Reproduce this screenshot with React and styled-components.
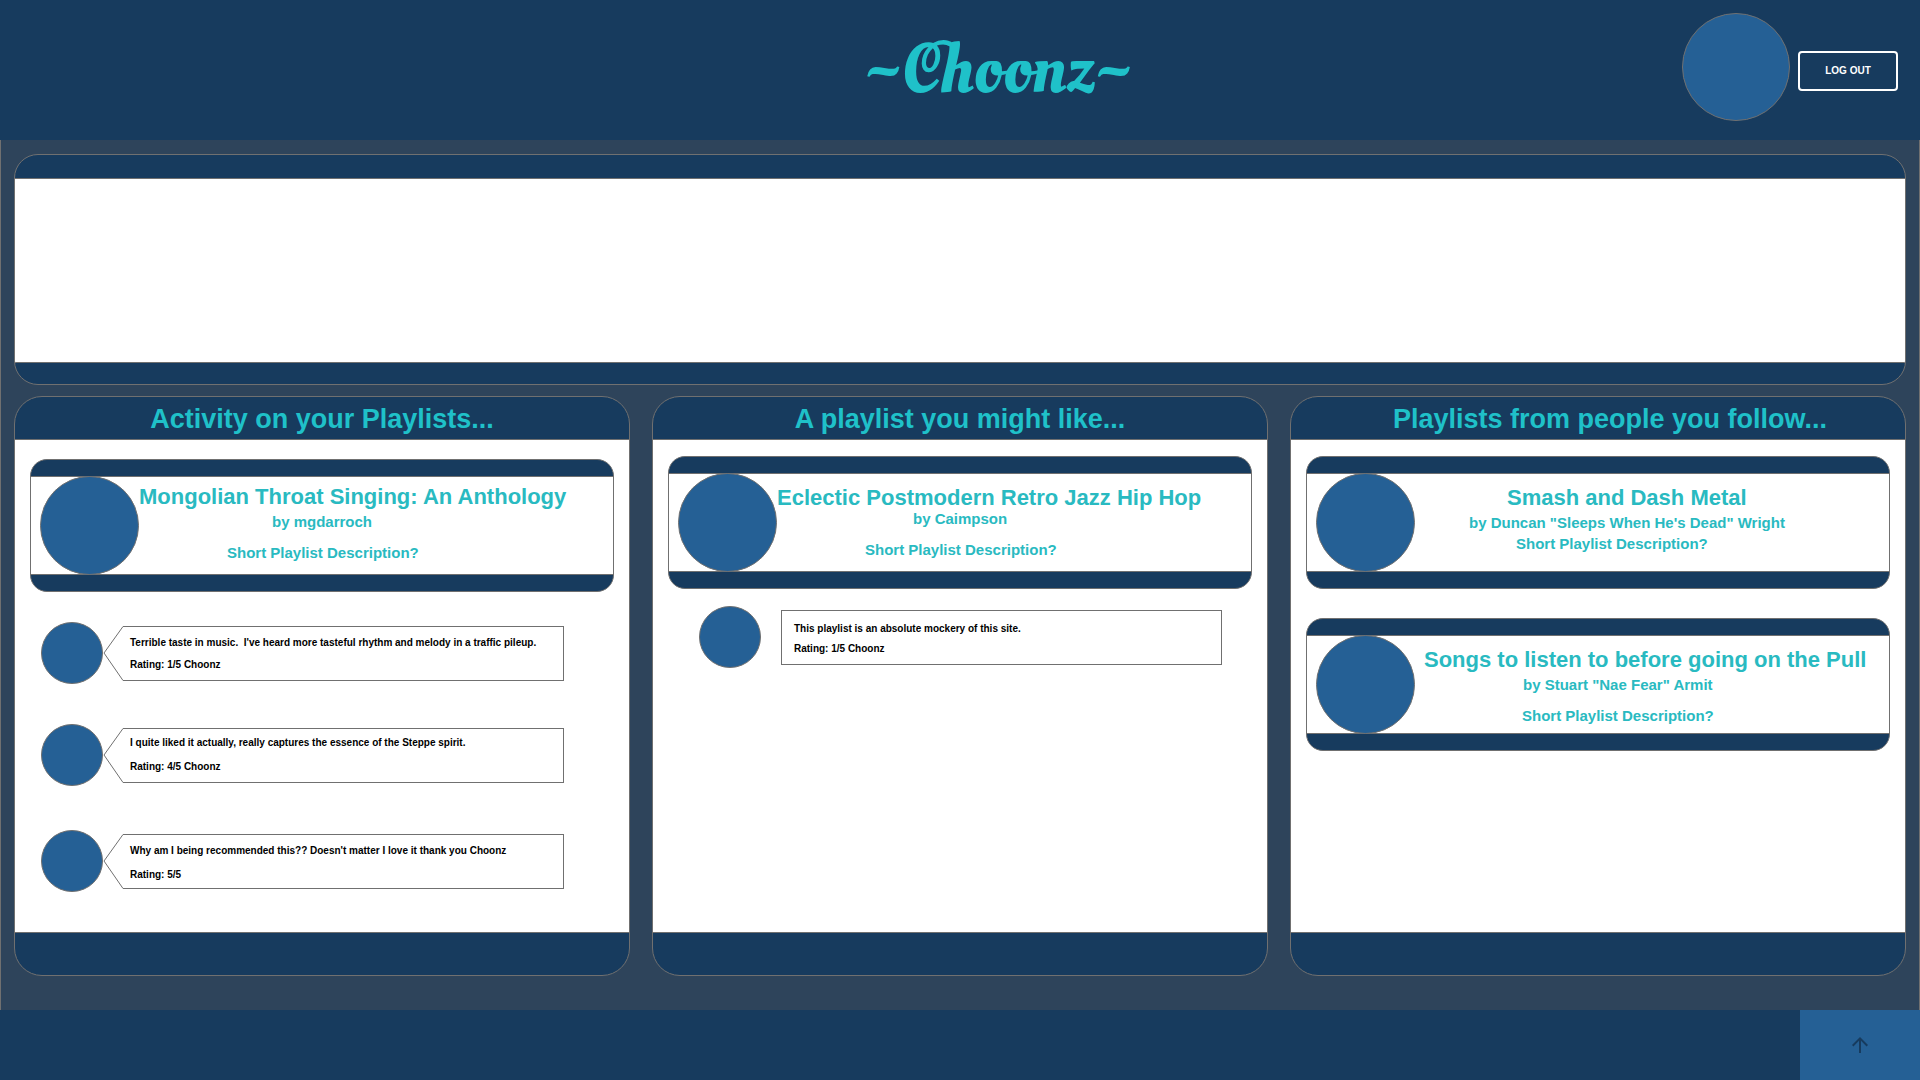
import React from "react";
import styled, { createGlobalStyle } from "styled-components";

const color = {
  navy: "#173b5e",
  slate: "#2e445b",
  blue: "#256095",
  teal: "#1fc1c9",
  tealOnWhite: "#29bac1",
  line: "#707070",
};

const GlobalStyle = createGlobalStyle`
  *, *::before, *::after { box-sizing: border-box; }
  body {
    margin: 0;
    background: ${color.slate};
    font-family: "Liberation Sans", Arial, sans-serif;
  }
  h1, h2, h3, p { margin: 0; }
`;

const Page = styled.div`
  display: flex;
  flex-direction: column;
  min-height: 100vh;
`;

const Header = styled.header`
  display: grid;
  grid-template-columns: 1fr auto 1fr;
  align-items: center;
  min-height: 140px;
  padding: 2px 22px 0 98px;
  background: ${color.navy};
`;

const Logo = styled.h1`
  grid-column: 2;
  color: ${color.teal};
  font-family: "Oleo Script Swash Caps", "Oleo Script", Lobster, "Liberation Serif", serif;
  font-size: 70px;
  font-weight: 400;
  line-height: 88px;
`;

const Account = styled.div`
  display: flex;
  align-items: center;
  justify-content: flex-end;
  gap: 8px;
`;

const Avatar = styled.div`
  flex: none;
  width: ${(p) => p.$size}px;
  height: ${(p) => p.$size}px;
  border: 1px solid ${color.line};
  border-radius: 50%;
  background: ${color.blue};
`;

const AccountAvatar = styled(Avatar)`
  margin-bottom: 8px;
`;

const LogOutButton = styled.button`
  width: 100px;
  height: 40px;
  padding: 0;
  border: 2px solid #fff;
  border-radius: 4px;
  background: transparent;
  color: #fff;
  font: 700 10px/12px "Liberation Sans", Arial, sans-serif;
  cursor: pointer;
`;

const Main = styled.main`
  display: flex;
  flex: 1;
  flex-direction: column;
  gap: 11px;
  padding: 14px 13px 34px;
  border: solid ${color.line};
  border-width: 0 1px;
`;

const Panel = styled.section`
  display: flex;
  flex-direction: column;
  overflow: hidden;
  border: 1px solid ${color.line};
  border-radius: ${(p) => p.$radius}px;
  background: ${color.navy};
`;

const BannerBody = styled.div`
  height: 185px;
  margin: 23px 0 21px;
  border: solid ${color.line};
  border-width: 1px 0;
  background: #fff;
`;

const Columns = styled.div`
  display: grid;
  flex: 1;
  grid-template-columns: repeat(3, minmax(0, 1fr));
  gap: 22px;
`;

const ColumnTitle = styled.h2`
  padding: 2px 0 0 ${(p) => p.$inset || 0}px;
  color: ${color.teal};
  font-size: 27px;
  line-height: 40px;
  text-align: center;
`;

const ColumnBody = styled.div`
  flex: 1;
  margin-bottom: 42px;
  padding: ${(p) => p.$top}px 15px 0;
  border: solid ${color.line};
  border-width: 1px 0;
  background: #fff;
`;

const CardList = styled.div`
  display: flex;
  flex-direction: column;
  gap: 29px;
`;

const CardShell = styled.article`
  overflow: hidden;
  padding: 16px 0;
  border: 1px solid ${color.line};
  border-radius: 17px;
  background: ${color.navy};
`;

const CardBody = styled.div`
  display: flex;
  height: 99px;
  padding-left: 9px;
  border: solid ${color.line};
  border-width: 1px 0;
  background: #fff;
`;

const CardAvatar = styled(Avatar)`
  margin: -1px 0;
`;

const CardText = styled.div`
  padding-top: ${(p) => p.$top}px;
  color: ${color.tealOnWhite};
  font-weight: 700;
  white-space: nowrap;
`;

const CardTitle = styled.h3`
  padding-left: ${(p) => p.$indent}px;
  font-size: 22px;
  line-height: 24px;
`;

const CardLine = styled.p`
  margin-top: ${(p) => p.$gap}px;
  padding-left: ${(p) => p.$indent}px;
  font-size: 15px;
  line-height: 18px;
`;

const Comments = styled.ul`
  display: flex;
  flex-direction: column;
  margin: 0;
  padding: ${(p) => p.$top}px 0 0 ${(p) => p.$left}px;
  list-style: none;
`;

const Comment = styled.li`
  display: flex;
  align-items: center;
  margin-bottom: ${(p) => p.$space || 0}px;
`;

const Tail = styled.svg`
  flex: none;
  display: block;
  width: 20px;
  height: 55px;
`;

const Bubble = styled.div`
  width: 441px;
  height: 55px;
  margin-left: ${(p) => (p.$boxed ? 20 : 0)}px;
  padding: ${(p) => p.$top}px ${(p) => (p.$boxed ? 12 : 7)}px 0;
  border: 1px solid ${color.line};
  border-left-width: ${(p) => (p.$boxed ? 1 : 0)}px;
  color: #000;
  font-size: 10px;
  font-weight: 700;
  line-height: 12px;
  white-space: pre;
`;

const Rating = styled.p`
  margin-top: ${(p) => p.$gap}px;
`;

const Footer = styled.footer`
  display: flex;
  justify-content: flex-end;
  height: 70px;
  background: ${color.navy};
`;

const TopLink = styled.a`
  display: flex;
  align-items: center;
  justify-content: center;
  width: 120px;
  background: ${color.blue};
  color: ${color.navy};
`;

function PlaylistCard({ title, author, top = 12 }) {
  return (
    <CardShell>
      <CardBody>
        <CardAvatar $size={99} />
        <CardText $top={top}>
          <CardTitle $indent={title.indent}>{title.text}</CardTitle>
          <CardLine $gap={author.gap} $indent={author.indent}>{author.text}</CardLine>
          <CardLine $gap={author.after} $indent={author.descriptionIndent}>
            Short Playlist Description?
          </CardLine>
        </CardText>
      </CardBody>
    </CardShell>
  );
}

function CommentRow({ text, rating, top = 10, gap, space, boxed }) {
  return (
    <Comment $space={space}>
      <Avatar $size={62} />
      {!boxed && (
        <Tail viewBox="0 0 20 55" fill="none" stroke={color.line} aria-hidden="true">
          <path d="M20 0.5L1 27L20 54.5" />
        </Tail>
      )}
      <Bubble $boxed={boxed} $top={top}>
        <p>{text}</p>
        <Rating $gap={gap}>{rating}</Rating>
      </Bubble>
    </Comment>
  );
}

const activity = [
  { text: "Terrible taste in music.  I've heard more tasteful rhythm and melody in a traffic pileup.", rating: "Rating: 1/5 Choonz", gap: 10, space: 40 },
  { text: "I quite liked it actually, really captures the essence of the Steppe spirit.", rating: "Rating: 4/5 Choonz", top: 8, gap: 12, space: 44 },
  { text: "Why am I being recommended this?? Doesn't matter I love it thank you Choonz", rating: "Rating: 5/5", gap: 12 },
];

export default function App() {
  return (
    <Page id="top">
      <GlobalStyle />
      <Header>
        <Logo>~Choonz~</Logo>
        <Account>
          <AccountAvatar $size={108} />
          <LogOutButton type="button">LOG OUT</LogOutButton>
        </Account>
      </Header>
      <Main>
        <Panel $radius={24}>
          <BannerBody />
        </Panel>
        <Columns>
          <Panel $radius={28}>
            <ColumnTitle>Activity on your Playlists...</ColumnTitle>
            <ColumnBody $top={19}>
              <PlaylistCard
                top={8}
                title={{ text: "Mongolian Throat Singing: An Anthology", indent: 0 }}
                author={{ text: "by mgdarroch", indent: 133, gap: 4, after: 13, descriptionIndent: 88 }}
              />
              <Comments $top={30} $left={11}>
                {activity.map((c) => (
                  <CommentRow key={c.text} {...c} />
                ))}
              </Comments>
            </ColumnBody>
          </Panel>
          <Panel $radius={28}>
            <ColumnTitle>A playlist you might like...</ColumnTitle>
            <ColumnBody $top={16}>
              <PlaylistCard
                title={{ text: "Eclectic Postmodern Retro Jazz Hip Hop", indent: 0 }}
                author={{ text: "by Caimpson", indent: 136, gap: 0, after: 13, descriptionIndent: 88 }}
              />
              <Comments $top={17} $left={31}>
                <CommentRow
                  boxed
                  text="This playlist is an absolute mockery of this site."
                  rating="Rating: 1/5 Choonz"
                  top={12}
                  gap={8}
                />
              </Comments>
            </ColumnBody>
          </Panel>
          <Panel $radius={28}>
            <ColumnTitle $inset={24}>Playlists from people you follow...</ColumnTitle>
            <ColumnBody $top={16}>
              <CardList>
                <PlaylistCard
                  title={{ text: "Smash and Dash Metal", indent: 92 }}
                  author={{ text: "by Duncan \"Sleeps When He's Dead\" Wright", indent: 54, gap: 4, after: 3, descriptionIndent: 101 }}
                />
                <PlaylistCard
                  title={{ text: "Songs to listen to before going on the Pull", indent: 9 }}
                  author={{ text: "by Stuart \"Nae Fear\" Armit", indent: 108, gap: 4, after: 13, descriptionIndent: 107 }}
                />
              </CardList>
            </ColumnBody>
          </Panel>
        </Columns>
      </Main>
      <Footer>
        <TopLink href="#top" aria-label="Back to top">
          <svg width="24" height="24" viewBox="0 0 24 24" fill="currentColor" aria-hidden="true">
            <path d="M4 12l1.41 1.41L11 7.83V20h2V7.83l5.58 5.59L20 12l-8-8-8 8z" />
          </svg>
        </TopLink>
      </Footer>
    </Page>
  );
}
